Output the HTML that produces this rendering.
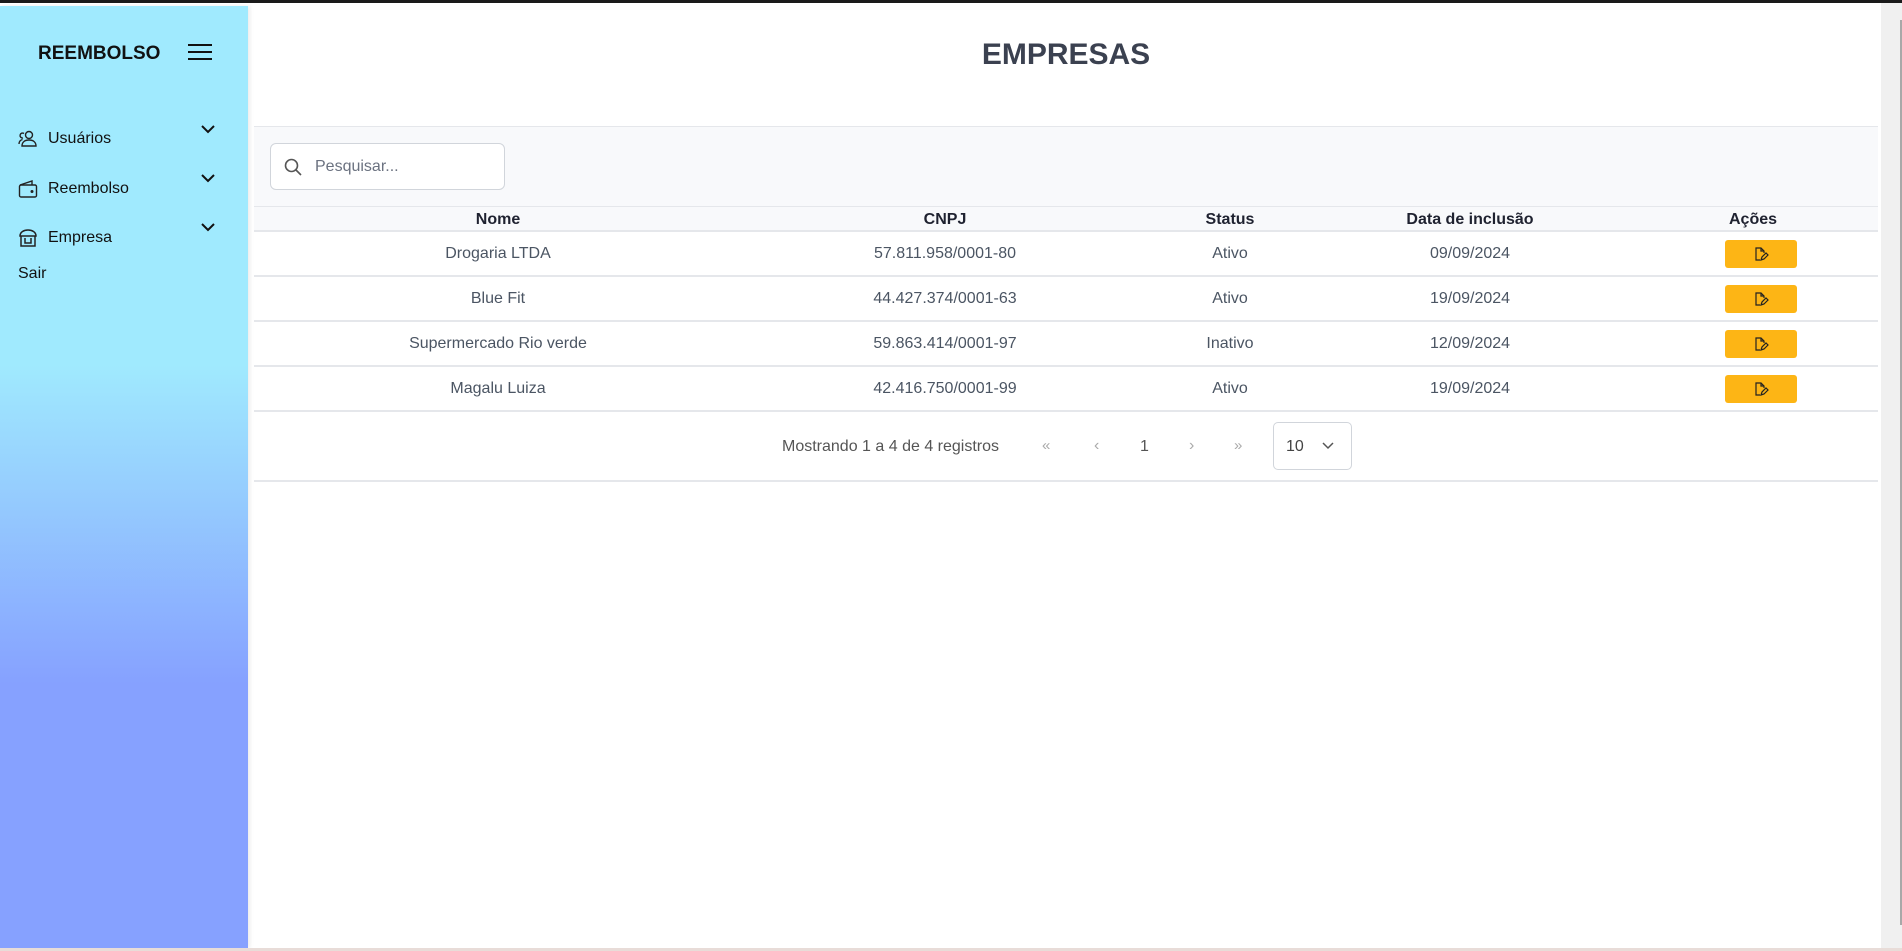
<!DOCTYPE html>
<html><head><meta charset="utf-8"><style>
*{box-sizing:border-box;margin:0;padding:0}
body{width:1902px;height:951px;overflow:hidden;background:#fff;font-family:"Liberation Sans",sans-serif;position:relative}
.abs{position:absolute}
#top{left:0;top:0;width:1902px;height:3px;background:#1a1a1a}
#side{left:0;top:6px;width:248px;height:942px;background:linear-gradient(to bottom,#a0eafe 0%,#a0eafe 38%,#86a1ff 72%,#86a1ff 100%);box-shadow:2px 0 4px rgba(0,0,0,.08)}
.mi{position:absolute;left:18px;font-size:16px;color:#111;display:flex;align-items:center}
.mi svg{margin-right:10px}
.chev{position:absolute;left:200px}
#bot{left:0;top:948px;width:1902px;height:3px;background:#e8dcd8}
#sb{left:1881px;top:3px;width:21px;height:945px;background:#f0f0f0}
#thumb{left:1900px;top:20px;width:2px;height:905px;background:#a8a8a8}
.cell{position:absolute;text-align:center;font-size:16px;color:#4b5563;transform:translateX(-50%);white-space:nowrap}
.hd{font-weight:bold;color:#1f2230;font-size:16px}
.hl{position:absolute;left:254px;width:1624px;height:2px;background:#e5e7eb}
.btn{position:absolute;left:1725px;width:72px;height:28px;background:#fdb515;border-radius:3px;display:flex;align-items:center;justify-content:center}
</style></head><body>
<div id="top" class="abs"></div>
<div id="side" class="abs">
 <div class="abs" style="left:38px;top:37px;font-weight:bold;font-size:19px;color:#111">REEMBOLSO</div>
 <div class="abs" style="left:188px;top:38px;width:24px">
  <div style="height:2px;background:#111;margin-bottom:5px"></div><div style="height:2px;background:#111;margin-bottom:5px"></div><div style="height:2px;background:#111"></div></div>
 <div class="mi" style="top:124px"><svg width="20" height="18" viewBox="0 0 20 18" fill="none" stroke="#222" stroke-width="1.4"><circle cx="11" cy="5" r="3.5"/><path d="M4 16c0-4 3-6 7-6s7 2 7 6z"/><path d="M5 8a2.5 2.5 0 1 1 1-4.5"/><path d="M1 14c0-2.5 1.5-4 3.5-4.5"/></svg>Usuários</div>
 <div class="mi" style="top:173px"><svg width="20" height="20" viewBox="0 0 20 20" fill="none" stroke="#222" stroke-width="1.4"><rect x="1.5" y="6" width="17" height="12" rx="1.5"/><path d="M2 6l12-4v4"/><circle cx="14" cy="12.5" r=".8" fill="#222"/></svg>Reembolso</div>
 <div class="mi" style="top:222px"><svg width="20" height="20" viewBox="0 0 20 20" fill="none" stroke="#222" stroke-width="1.5"><path d="M2 8c0-4 4-6 8-6s8 2 8 6z"/><path d="M3 8v10h14V8"/><path d="M7 10v5h6v-5"/></svg>Empresa</div>
 <div class="mi" style="top:259px">Sair</div>
 <svg class="chev" style="top:118px" width="16" height="10" viewBox="0 0 16 10" fill="none" stroke="#111" stroke-width="2"><path d="M2 2l6 6 6-6"/></svg>
 <svg class="chev" style="top:167px" width="16" height="10" viewBox="0 0 16 10" fill="none" stroke="#111" stroke-width="2"><path d="M2 2l6 6 6-6"/></svg>
 <svg class="chev" style="top:216px" width="16" height="10" viewBox="0 0 16 10" fill="none" stroke="#111" stroke-width="2"><path d="M2 2l6 6 6-6"/></svg>
</div>
<div class="abs" style="top:38px;left:1066px;transform:translateX(-50%);font-family:'Liberation Sans',sans-serif;font-weight:bold;font-size:30px;color:#3b4150;white-space:nowrap">EMPRESAS</div>
<div class="abs" style="left:254px;top:126px;width:1624px;height:81px;background:#f8f9fb;border-top:1px solid #e5e7eb"></div>
<div class="abs" style="left:270px;top:143px;width:235px;height:47px;background:#fff;border:1px solid #d1d5db;border-radius:6px;display:flex;align-items:center;padding-left:12px;font-size:16px;color:#6b7280">
 <svg width="20" height="20" viewBox="0 0 20 20" fill="none" stroke="#555" stroke-width="1.6" style="margin-right:12px"><circle cx="8.5" cy="8.5" r="6"/><path d="M13 13l5 5"/></svg>Pesquisar...</div>
<div class="hl" style="top:206px;height:1px"></div>
<div class="hl" style="top:230px"></div>
<div class="hl" style="top:275px"></div>
<div class="hl" style="top:320px"></div>
<div class="hl" style="top:365px"></div>
<div class="hl" style="top:410px"></div>
<div class="hl" style="top:480px"></div>
<div class="abs" style="left:254px;top:207px;width:1624px;height:23px;background:#f8f9fb"></div>
<div class="cell hd" style="left:498px;top:211px">Nome</div>
<div class="cell hd" style="left:945px;top:211px">CNPJ</div>
<div class="cell hd" style="left:1230px;top:211px">Status</div>
<div class="cell hd" style="left:1470px;top:211px">Data de inclusão</div>
<div class="cell hd" style="left:1753px;top:211px">Ações</div>

<div class="cell" style="left:498px;top:245px">Drogaria LTDA</div>
<div class="cell" style="left:945px;top:245px">57.811.958/0001-80</div>
<div class="cell" style="left:1230px;top:245px">Ativo</div>
<div class="cell" style="left:1470px;top:245px">09/09/2024</div>
<div class="cell" style="left:498px;top:290px">Blue Fit</div>
<div class="cell" style="left:945px;top:290px">44.427.374/0001-63</div>
<div class="cell" style="left:1230px;top:290px">Ativo</div>
<div class="cell" style="left:1470px;top:290px">19/09/2024</div>
<div class="cell" style="left:498px;top:335px">Supermercado Rio verde</div>
<div class="cell" style="left:945px;top:335px">59.863.414/0001-97</div>
<div class="cell" style="left:1230px;top:335px">Inativo</div>
<div class="cell" style="left:1470px;top:335px">12/09/2024</div>
<div class="cell" style="left:498px;top:380px">Magalu Luiza</div>
<div class="cell" style="left:945px;top:380px">42.416.750/0001-99</div>
<div class="cell" style="left:1230px;top:380px">Ativo</div>
<div class="cell" style="left:1470px;top:380px">19/09/2024</div>

<div class="btn" style="top:240px"><svg width="16" height="16" viewBox="0 0 16 16" fill="none" stroke="#222" stroke-width="1.2"><path d="M7 14H3V2h5l3 3v2"/><path d="M8 2v3h3"/><path d="M8 14l1-3 4-4 2 2-4 4z"/></svg></div>
<div class="btn" style="top:285px"><svg width="16" height="16" viewBox="0 0 16 16" fill="none" stroke="#222" stroke-width="1.2"><path d="M7 14H3V2h5l3 3v2"/><path d="M8 2v3h3"/><path d="M8 14l1-3 4-4 2 2-4 4z"/></svg></div>
<div class="btn" style="top:330px"><svg width="16" height="16" viewBox="0 0 16 16" fill="none" stroke="#222" stroke-width="1.2"><path d="M7 14H3V2h5l3 3v2"/><path d="M8 2v3h3"/><path d="M8 14l1-3 4-4 2 2-4 4z"/></svg></div>
<div class="btn" style="top:375px"><svg width="16" height="16" viewBox="0 0 16 16" fill="none" stroke="#222" stroke-width="1.2"><path d="M7 14H3V2h5l3 3v2"/><path d="M8 2v3h3"/><path d="M8 14l1-3 4-4 2 2-4 4z"/></svg></div>

<div class="abs" style="left:782px;top:438px;font-size:16px;color:#555">Mostrando 1 a 4 de 4 registros</div>
<div class="abs" style="left:1042px;top:437px;font-size:15px;color:#aaa">«</div>
<div class="abs" style="left:1094px;top:437px;font-size:16px;color:#aaa">‹</div>
<div class="abs" style="left:1140px;top:438px;font-size:16px;color:#555">1</div>
<div class="abs" style="left:1189px;top:437px;font-size:16px;color:#aaa">›</div>
<div class="abs" style="left:1234px;top:437px;font-size:15px;color:#aaa">»</div>
<div class="abs" style="left:1273px;top:422px;width:79px;height:48px;border:1px solid #d1d5db;border-radius:5px;font-size:16px;color:#444;padding:15px 0 0 12px">10
 <svg style="position:absolute;left:48px;top:19px" width="12" height="8" viewBox="0 0 12 8" fill="none" stroke="#555" stroke-width="1.5"><path d="M1 1l5 5 5-5"/></svg></div>

<div id="sb" class="abs"></div>
<div id="thumb" class="abs"></div>
<div id="bot" class="abs"></div>
</body></html>
